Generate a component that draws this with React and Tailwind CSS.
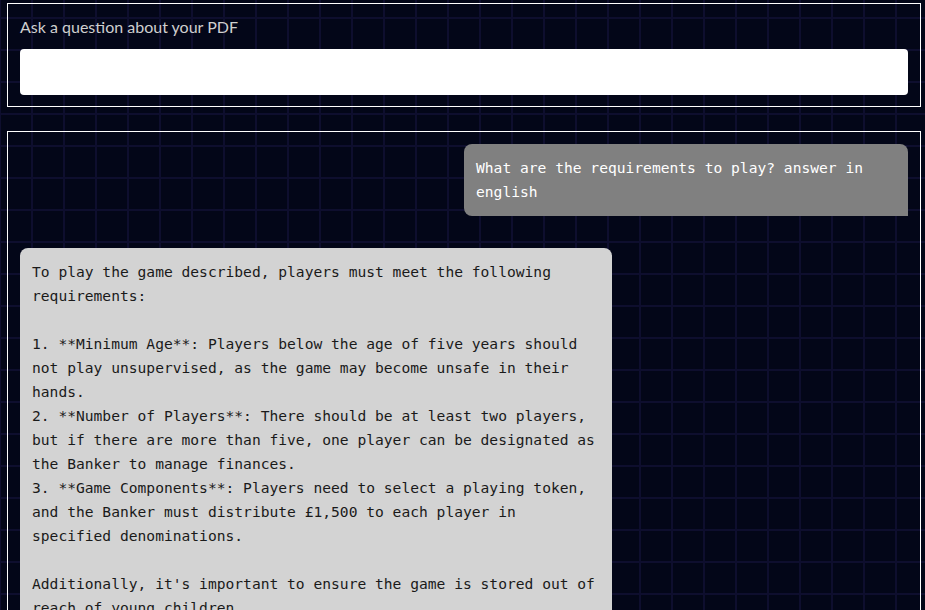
import React, { useState } from 'react';

const answer = [
    'To play the game described, players must meet the following',
    'requirements:',
    '',
    '1. **Minimum Age**: Players below the age of five years should',
    'not play unsupervised, as the game may become unsafe in their',
    'hands.',
    '2. **Number of Players**: There should be at least two players,',
    'but if there are more than five, one player can be designated as',
    'the Banker to manage finances.',
    '3. **Game Components**: Players need to select a playing token,',
    'and the Banker must distribute £1,500 to each player in',
    'specified denominations.',
    '',
    "Additionally, it's important to ensure the game is stored out of",
    'reach of young children.',
].join('\n');

const messages = [
    { role: 'user', text: 'What are the requirements to play? answer in\nenglish' },
    { role: 'assistant', text: answer },
];

const App = () => {
    const [question, setQuestion] = useState('');

    return (
        <div className="h-[610px] overflow-hidden bg-[#030618] bg-[linear-gradient(to_right,#0e0e2e_2px,transparent_2px),linear-gradient(to_bottom,#0e0e2e_2px,transparent_2px)] bg-[size:32px_32px] bg-[position:31px_17px] pt-[3px]">
            <div className="ml-[7px] w-[914px]">
                {/* question input */}
                <div className="border border-white px-3 pt-[11px] pb-[11px]">
                    <label htmlFor="q" className="block text-[16px] leading-6 text-[#cfcfcf] font-['Lato','Noto_Sans',sans-serif] mb-[10px]">
                        Ask a question about your PDF
                    </label>
                    <input
                        id="q"
                        type="text"
                        value={question}
                        onChange={(e) => setQuestion(e.target.value)}
                        className="block w-full h-[46px] rounded-sm bg-white outline-none px-3"
                    />
                </div>

                {/* chat */}
                <div className="mt-[24px] h-[600px] border border-white p-3 font-['DejaVu_Sans_Mono',monospace] text-[14.62px] leading-6">
                    {messages.map((m, i) => (
                        m.role === 'user' ? (
                            <div key={i} className="flex justify-end mb-8">
                                <div className="w-1/2 bg-[#808080] text-white rounded-lg rounded-br-none p-3 whitespace-pre">
                                    {m.text}
                                </div>
                            </div>
                        ) : (
                            <div key={i} className="flex justify-start mb-8">
                                <div className="w-2/3 bg-[#d3d3d3] text-[#1a1a1a] rounded-lg p-3 whitespace-pre">
                                    {m.text}
                                </div>
                            </div>
                        )
                    ))}
                </div>
            </div>
        </div>
    );
};

export default App;
